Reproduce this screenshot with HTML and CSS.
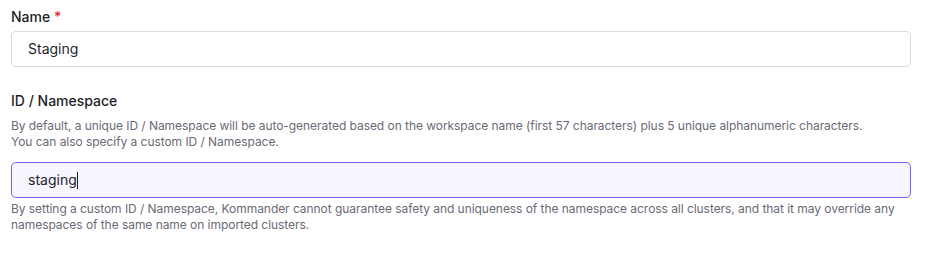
FILE: index.html
```html
<!DOCTYPE html>
<html lang="en">
<head>
    <meta charset="UTF-8">
    <title>Workspace</title>
    <link rel="stylesheet" href="styles.css">
</head>
<body>
    <form class="form">
        <!-- Name -->
        <div class="field">
            <label class="label">Name <span class="required">*</span></label>
            <div class="input">Staging</div>
        </div>

        <!-- ID / Namespace -->
        <div class="field">
            <label class="label">ID / Namespace</label>
            <p class="hint hint-top">By default, a unique ID / Namespace will be auto-generated based on the workspace name (first 57 characters) plus 5 unique alphanumeric characters.<br>You can also specify a custom ID / Namespace.</p>
            <div class="input input-focus">staging<span class="caret"></span></div>
            <p class="hint hint-bottom">By setting a custom ID / Namespace, Kommander cannot guarantee safety and uniqueness of the namespace across all clusters, and that it may override any namespaces of the same name on imported clusters.</p>
        </div>
    </form>
</body>
</html>
```

FILE: styles.css
```css
body {
    margin: 0;
    font-family: Inter, "Noto Sans", sans-serif;
    background-color: #fff;
    color: #1f1f2b;
}

.form {
    width: 900px;
    padding: 7px 0 0 11px;
}

.field {
    margin-bottom: 24px;
}

.label {
    display: block;
    font-size: 14px;
    line-height: 20px;
    font-weight: 500;
    margin-bottom: 4px;
}

.required {
    color: #e5242f;
}

.input {
    box-sizing: border-box;
    height: 36px;
    padding: 0 16px;
    border: 1px solid #d8d8de;
    border-radius: 5px;
    font-size: 14px;
    line-height: 34px;
    background-color: #fff;
}

.input-focus {
    border-color: #7b5cf0;
    background-color: #f7f6fe;
}

.caret {
    display: inline-block;
    width: 1px;
    height: 17px;
    background-color: #1f1f2b;
    vertical-align: -4px;
}

.hint {
    margin: 0;
    font-size: 12px;
    line-height: 16px;
    letter-spacing: -0.05px;
    color: #6a6a76;
}

.hint-top {
    margin-top: 7px;
    margin-bottom: 12px;
}

.hint-bottom {
    margin-top: 3px;
}
```
